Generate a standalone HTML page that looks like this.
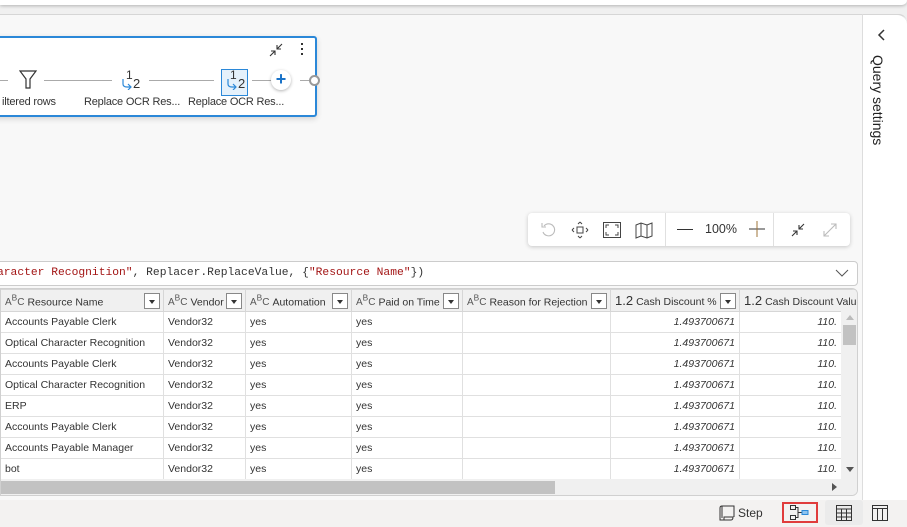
<!DOCTYPE html>
<html><head><style>
*{box-sizing:border-box;margin:0;padding:0}
body{width:907px;height:527px;overflow:hidden;background:#f0f0f0;font-family:"Segoe UI","Liberation Sans",sans-serif;font-size:11px;color:#333;position:relative}
.abs{position:absolute}
.topbar{left:0;top:0;width:907px;height:5px;background:#fff;box-shadow:0 1px 3px rgba(0,0,0,.25);border-radius:0 0 6px 0}
.main{left:0;top:14px;width:907px;height:490px;background:#f8f8f8;border-top:1px solid #d6d6d6;border-radius:0 8px 0 0}
.rp{left:862px;top:14px;width:45px;height:490px;background:#fff;border-left:1px solid #ddd;border-top:1px solid #d6d6d6;border-radius:0 10px 0 0}
.card{left:-6px;top:36px;width:323px;height:81px;background:#fff;border:2px solid #2b88d8;border-radius:3px;box-shadow:0 2px 6px rgba(0,0,0,.15)}
.lbl{font-size:11px;color:#333;white-space:nowrap;letter-spacing:-0.2px}
.tb{left:528px;top:213px;width:322px;height:33px;background:#fff;border-radius:4px;box-shadow:0 1px 4px rgba(0,0,0,.2)}
.fb{left:-4px;top:261px;width:862px;height:25px;background:#fff;border:1px solid #ccc;border-radius:4px;font-family:"Liberation Mono",monospace;font-size:11.3px;line-height:23px;padding-left:0;white-space:nowrap}
.grid{left:0;top:288px;width:858px;height:208px;background:#fff;border:1px solid #d0d0d0;border-radius:0 6px 6px 0;overflow:hidden}
table{border-collapse:collapse;position:absolute;left:-1px;top:0;table-layout:fixed;width:859px}
td{height:21px;border:1px solid #e0e0e0;padding:0 4px;white-space:nowrap;overflow:hidden;font-size:10.5px;color:#333}
th{height:22px;background:#f0f0f0;border:1px solid #d6d6d6;font-weight:normal;text-align:left;padding:0 4px;white-space:nowrap;overflow:hidden;font-size:10.5px;color:#333;position:relative}
.dd{position:absolute;right:3px;top:3px;width:16px;height:16px;border:1px solid #888;background:#fff}
.dd:after{content:"";position:absolute;left:4px;top:6px;border-left:3.5px solid transparent;border-right:3.5px solid transparent;border-top:4px solid #333}
.ic{font-size:10px;color:#555;margin-right:3px}
.num{text-align:right;font-style:italic}
.status{left:0;top:500px;width:907px;height:27px;background:#f3f2f1}
</style></head><body>
<div class="abs topbar"></div>
<div class="abs main"></div>
<div class="abs rp">
 <svg class="abs" style="left:14px;top:14px" width="10" height="12"><path d="M7 1 L2 6 L7 11" stroke="#333" stroke-width="1.5" fill="none"/></svg>
 <div class="abs" style="left:7px;top:40px;writing-mode:vertical-rl;font-size:14px;color:#222;white-space:nowrap">Query settings</div>
</div>

<div class="abs card">
 <svg class="abs" style="left:272px;top:4px" width="16" height="16"><path d="M2 14 L7 9 M3 9 H7 V13 M14 2 L9 7 M9 3 V7 H13" stroke="#333" stroke-width="1.1" fill="none"/></svg>
 <div class="abs" style="left:305px;top:5px;width:2px;font-size:0"><div style="width:2px;height:2px;background:#333;margin-bottom:3px"></div><div style="width:2px;height:2px;background:#333;margin-bottom:3px"></div><div style="width:2px;height:2px;background:#333"></div></div>
 <div class="abs" style="left:0;top:42px;width:12px;height:1px;background:#aaa"></div>
 <svg class="abs" style="left:23px;top:32px" width="18" height="20"><path d="M1 1 H17 L11 9 V18 H7 V9 Z" stroke="#333" stroke-width="1.2" fill="none"/></svg>
 <div class="abs" style="left:48px;top:42px;width:68px;height:1px;background:#aaa"></div>
 <div class="abs" style="left:153px;top:42px;width:65px;height:1px;background:#aaa"></div>
 <div class="abs" style="left:256px;top:42px;width:22px;height:1px;background:#aaa"></div>
 <div class="abs" style="left:304px;top:42px;width:10px;height:1px;background:#aaa"></div>
 <div class="abs" style="left:130px;top:30px;font-size:12px;color:#333">1</div>
 <div class="abs" style="left:137px;top:38px;font-size:13px;color:#333">2</div>
 <svg class="abs" style="left:125px;top:40px" width="12" height="12"><path d="M2 1 V6 Q2 9 6 9 H10 M7 6 L10 9 L7 12" stroke="#2b88d8" stroke-width="1.2" fill="none"/></svg>
 <div class="abs" style="left:225px;top:31px;width:27px;height:27px;background:#e5f1fb;border:1px solid #2b88d8"></div>
 <div class="abs" style="left:234px;top:30px;font-size:12px;color:#333">1</div>
 <div class="abs" style="left:242px;top:38px;font-size:13px;color:#333">2</div>
 <svg class="abs" style="left:230px;top:40px" width="12" height="12"><path d="M2 1 V6 Q2 9 6 9 H10 M7 6 L10 9 L7 12" stroke="#2b88d8" stroke-width="1.2" fill="none"/></svg>
 <div class="abs" style="left:275px;top:32px;width:20px;height:20px;border-radius:50%;background:#fff;box-shadow:0 1px 3px rgba(0,0,0,.3);color:#1a73c8;font-size:18px;font-weight:bold;text-align:center;line-height:19px">+</div>
 <div class="abs" style="left:313px;top:37px;width:11px;height:11px;border-radius:50%;border:2px solid #999;background:#fff"></div>
 <div class="abs lbl" style="left:6px;top:58px">iltered rows</div>
 <div class="abs lbl" style="left:88px;top:58px">Replace OCR Res...</div>
 <div class="abs lbl" style="left:192px;top:58px">Replace OCR Res...</div>
</div>

<div class="abs tb">
 <svg class="abs" style="left:12px;top:9px" width="16" height="16"><path d="M4 4 A6 6 0 1 1 3 10 M2 1 V5 H6" stroke="#bbb" stroke-width="1.1" fill="none"/></svg>
 <svg class="abs" style="left:43px;top:8px" width="18" height="18"><rect x="6" y="6" width="6" height="6" stroke="#444" fill="none"/><path d="M9 1 L7 3 M9 1 L11 3 M9 17 L7 15 M9 17 L11 15 M1 9 L3 7 M1 9 L3 11 M17 9 L15 7 M17 9 L15 11" stroke="#444" fill="none"/></svg>
 <svg class="abs" style="left:75px;top:9px" width="18" height="16"><path d="M3 6 V3 H6 M12 3 H15 V6 M15 10 V13 H12 M6 13 H3 V10" stroke="#444" fill="none"/><rect x="0.5" y="0.5" width="17" height="15" stroke="#444" fill="none"/></svg>
 <svg class="abs" style="left:107px;top:8px" width="18" height="18"><path d="M1 4 L6 2 L12 4 L17 2 V15 L12 17 L6 15 L1 17 Z M6 2 V15 M12 4 V17" stroke="#444" fill="none"/></svg>
 <div class="abs" style="left:137px;top:0;width:1px;height:33px;background:#e0e0e0"></div>
 <div class="abs" style="left:149px;top:16px;width:16px;height:1px;background:#333"></div>
 <div class="abs" style="left:177px;top:9px;font-size:12.5px;color:#333">100%</div>
 <svg class="abs" style="left:221px;top:8px" width="16" height="16"><path d="M8 0 V16 M0 8 H16" stroke="#333" fill="none"/><path d="M8 0 V16" stroke="#e8a040" stroke-width="0.6"/></svg>
 <div class="abs" style="left:245px;top:0;width:1px;height:33px;background:#e0e0e0"></div>
 <svg class="abs" style="left:262px;top:9px" width="16" height="16"><path d="M2 14 L7 9 M3 9 H7 V13 M14 2 L9 7 M9 3 V7 H13" stroke="#333" stroke-width="1.1" fill="none"/></svg>
 <svg class="abs" style="left:294px;top:9px" width="16" height="16"><path d="M2 14 L14 2 M9 2 H14 V7 M2 9 V14 H7" stroke="#bbb" stroke-width="1.1" fill="none"/></svg>
</div>

<div class="abs fb"><span style="color:#a31515">aracter Recognition"</span>, Replacer.ReplaceValue, {<span style="color:#a31515">"Resource Name"</span>})
 <svg class="abs" style="left:838px;top:7px" width="14" height="9"><path d="M1 1 L7 7 L13 1" stroke="#555" fill="none"/></svg>
</div>

<div class="abs grid">
<table>
<colgroup><col style="width:163px"><col style="width:82px"><col style="width:106px"><col style="width:111px"><col style="width:148px"><col style="width:129px"><col style="width:120px"></colgroup>
<tr><th><span class="ic">A<sup>B</sup>C</span>Resource Name<span class="dd"></span></th><th><span class="ic">A<sup>B</sup>C</span>Vendor<span class="dd"></span></th><th><span class="ic">A<sup>B</sup>C</span>Automation<span class="dd"></span></th><th><span class="ic">A<sup>B</sup>C</span>Paid on Time<span class="dd"></span></th><th><span class="ic">A<sup>B</sup>C</span>Reason for Rejection<span class="dd"></span></th><th><span style="font-size:13px;margin-right:3px">1.2</span>Cash Discount %<span class="dd"></span></th><th><span style="font-size:13px;margin-right:3px">1.2</span>Cash Discount Value</th></tr>
<tr><td>Accounts Payable Clerk</td><td>Vendor32</td><td>yes</td><td>yes</td><td></td><td class="num">1.493700671</td><td class="num" style="padding-right:22px">110.</td></tr>
<tr><td>Optical Character Recognition</td><td>Vendor32</td><td>yes</td><td>yes</td><td></td><td class="num">1.493700671</td><td class="num" style="padding-right:22px">110.</td></tr>
<tr><td>Accounts Payable Clerk</td><td>Vendor32</td><td>yes</td><td>yes</td><td></td><td class="num">1.493700671</td><td class="num" style="padding-right:22px">110.</td></tr>
<tr><td>Optical Character Recognition</td><td>Vendor32</td><td>yes</td><td>yes</td><td></td><td class="num">1.493700671</td><td class="num" style="padding-right:22px">110.</td></tr>
<tr><td>ERP</td><td>Vendor32</td><td>yes</td><td>yes</td><td></td><td class="num">1.493700671</td><td class="num" style="padding-right:22px">110.</td></tr>
<tr><td>Accounts Payable Clerk</td><td>Vendor32</td><td>yes</td><td>yes</td><td></td><td class="num">1.493700671</td><td class="num" style="padding-right:22px">110.</td></tr>
<tr><td>Accounts Payable Manager</td><td>Vendor32</td><td>yes</td><td>yes</td><td></td><td class="num">1.493700671</td><td class="num" style="padding-right:22px">110.</td></tr>
<tr><td>bot</td><td>Vendor32</td><td>yes</td><td>yes</td><td></td><td class="num">1.493700671</td><td class="num" style="padding-right:22px">110.</td></tr>
</table>
<div class="abs" style="left:840px;top:22px;width:17px;height:168px;background:#f0f0f0"></div>
<div class="abs" style="left:845px;top:26px;border-left:4px solid transparent;border-right:4px solid transparent;border-bottom:5px solid #bbb"></div>
<div class="abs" style="left:842px;top:36px;width:13px;height:20px;background:#c2c2c2"></div>
<div class="abs" style="left:845px;top:178px;border-left:4px solid transparent;border-right:4px solid transparent;border-top:5px solid #555"></div>
<div class="abs" style="left:0;top:190px;width:858px;height:17px;background:#f0f0f0"></div>
<div class="abs" style="left:0;top:192px;width:554px;height:13px;background:#c2c2c2"></div>
<div class="abs" style="left:831px;top:194px;border-top:4px solid transparent;border-bottom:4px solid transparent;border-left:5px solid #555"></div>
</div>

<div class="abs status">
 <svg class="abs" style="left:718px;top:4px" width="18" height="18"><path d="M4 2 H16 V13 M4 2 Q2 2 2 4 V16 H13 Q15 16 15 13 V13 H6 V16 M4 2 V14" stroke="#333" stroke-width="1" fill="none"/></svg>
 <div class="abs" style="left:738px;top:6px;font-size:12px;color:#333">Step</div>
 <div class="abs" style="left:782px;top:2px;width:36px;height:21px;border:2px solid #e03c3c"></div>
 <svg class="abs" style="left:789px;top:5px" width="22" height="16"><rect x="1.5" y="0.5" width="5" height="4" stroke="#333" fill="none"/><rect x="1.5" y="10.5" width="5" height="4" stroke="#333" fill="none"/><path d="M6.5 2.5 H9 V12.5 H6.5 M9 7.5 H13" stroke="#333" fill="none"/><rect x="13" y="5.5" width="6" height="4" fill="#8fc3ee" stroke="#2b88d8"/></svg>
 <div class="abs" style="left:825px;top:0;width:38px;height:25px;background:#ebebeb;border-radius:3px"></div>
 <svg class="abs" style="left:836px;top:5px" width="16" height="16"><rect x="0.5" y="0.5" width="15" height="15" stroke="#333" fill="none"/><path d="M0.5 4 H15.5 M0.5 8 H15.5 M0.5 12 H15.5 M5.5 4 V15.5 M10.5 4 V15.5" stroke="#333" fill="none"/></svg>
 <svg class="abs" style="left:872px;top:5px" width="16" height="16"><rect x="0.5" y="0.5" width="15" height="15" stroke="#333" fill="none"/><path d="M0.5 3.5 H15.5 M5.5 3.5 V15.5 M10.5 3.5 V15.5" stroke="#333" fill="none"/></svg>
</div>
</body></html>
